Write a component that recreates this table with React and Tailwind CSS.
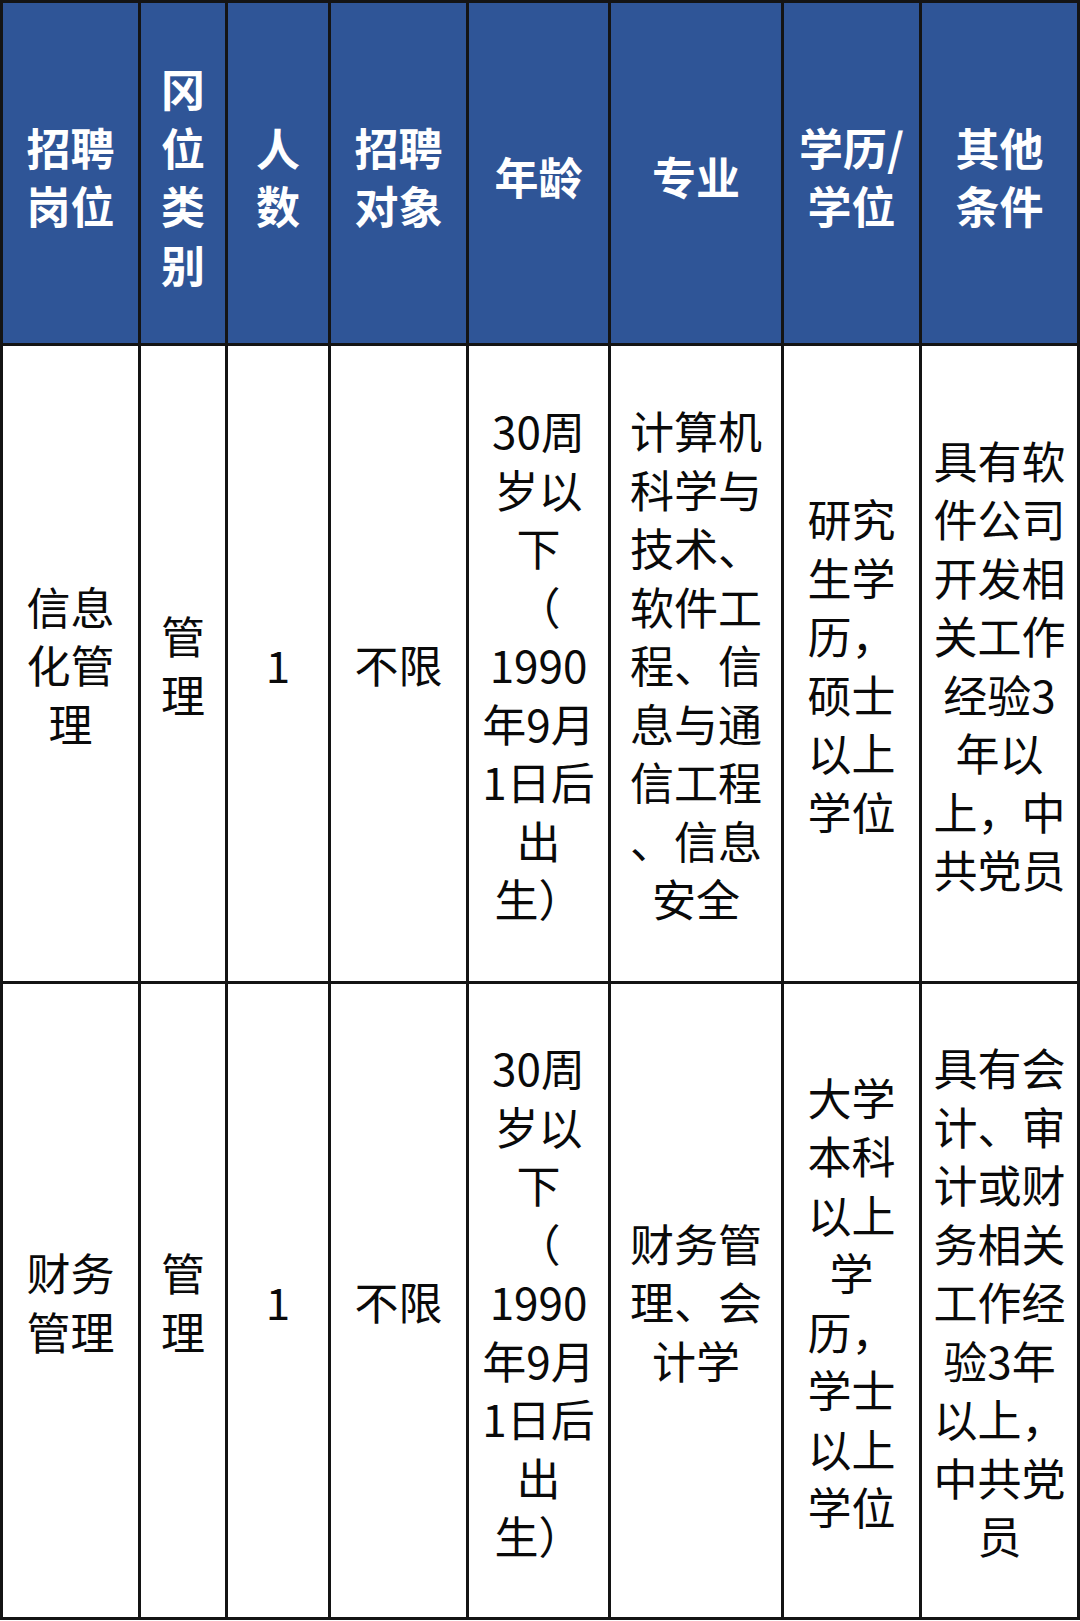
import React from "react";

const header = [
  ["招聘", "岗位"],
  ["冈", "位", "类", "别"],
  ["人", "数"],
  ["招聘", "对象"],
  ["年龄"],
  ["专业"],
  ["学历/", "学位"],
  ["其他", "条件"],
];

const age = ["30周", "岁以", "下", "（", "1990", "年9月", "1日后", "出", "生）"];

const rows = [
  [
    ["信息", "化管", "理"],
    ["管", "理"],
    ["1"],
    ["不限"],
    age,
    ["计算机", "科学与", "技术、", "软件工", "程、信", "息与通", "信工程", "、信息", "安全"],
    ["研究", "生学", "历，", "硕士", "以上", "学位"],
    ["具有软", "件公司", "开发相", "关工作", "经验3", "年以", "上，中", "共党员"],
  ],
  [
    ["财务", "管理"],
    ["管", "理"],
    ["1"],
    ["不限"],
    age,
    ["财务管", "理、会", "计学"],
    ["大学", "本科", "以上", "学", "历，", "学士", "以上", "学位"],
    ["具有会", "计、审", "计或财", "务相关", "工作经", "验3年", "以上，", "中共党", "员"],
  ],
];

const font = { fontFamily: '"Noto Sans CJK SC", "Noto Sans", sans-serif' };

function Lines({ lines }) {
  return (
    <span className="whitespace-nowrap">
      {lines.map((l, j) => (
        <React.Fragment key={j}>
          {j > 0 && <br />}
          {l}
        </React.Fragment>
      ))}
    </span>
  );
}

export default function App() {
  return (
    <div className="w-[1080px] h-[1621px] bg-white" style={font}>
      <div className="grid grid-cols-[135px_84px_100px_135px_139px_170px_135px_155px] grid-rows-[340px_635px_633px] gap-[3px] p-[3px] bg-[#141414] w-[1080px]">
        {header.map((lines, i) => (
          <div
            key={"h" + i}
            className="bg-[#2f5597] flex items-center justify-center text-center text-white font-bold text-[44px] leading-[58.5px] pt-[6px]"
          >
            <Lines lines={lines} />
          </div>
        ))}
        {rows.map((row, r) =>
          row.map((lines, i) => (
            <div
              key={"r" + r + "c" + i}
              className="bg-white flex items-center justify-center text-center text-[#0a0a0a] text-[44px] leading-[58.5px] pt-[2px]"
            >
              <Lines lines={lines} />
            </div>
          ))
        )}
      </div>
    </div>
  );
}
